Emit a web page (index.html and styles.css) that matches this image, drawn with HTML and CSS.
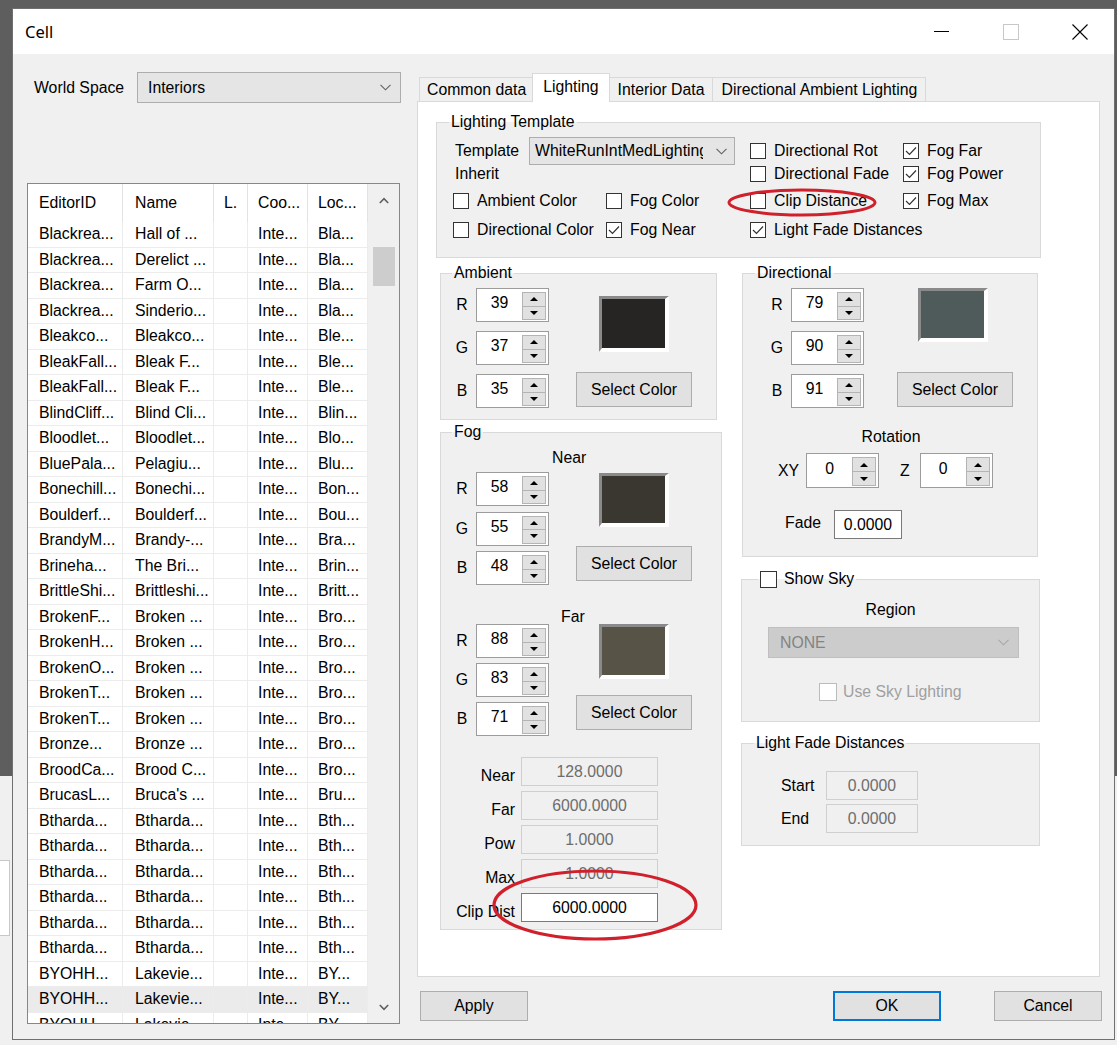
FILE: index.html
```html
<!DOCTYPE html>
<html>
<head>
<meta charset="utf-8">
<title>Cell</title>
<link rel="stylesheet" href="styles.css">
</head>
<body>
<div class="desk-app">
  <div class="da-field"></div>
</div>

<div class="dialog">
  <div class="titlebar">
    <span class="title">Cell</span>
    <div class="wbtns">
      <span class="wb"><svg width="15" height="1" viewBox="0 0 15 1"><rect width="15" height="1" fill="#000"/></svg></span>
      <span class="wb"><svg width="16" height="16" viewBox="0 0 16 16"><rect x=".5" y=".5" width="15" height="15" fill="none" stroke="#c8c8c8"/></svg></span>
      <span class="wb"><svg width="16" height="16" viewBox="0 0 16 16"><path d="M.5 .5L15.5 15.5M15.5 .5L.5 15.5" stroke="#000" stroke-width="1.1" fill="none"/></svg></span>
    </div>
  </div>

  <div class="dbody">
    <div class="leftcol">
      <div class="wsrow">
        <span class="wslabel">World Space</span>
        <div class="combo ws"><span class="ctext">Interiors</span><svg width="11" height="7" viewBox="0 0 11 7"><polyline points="0.5,0.8 5.5,5.8 10.5,0.8" fill="none" stroke="#606060" stroke-width="1.1"/></svg></div>
      </div>
      <div class="list">
        <div class="lmain">
          <div class="lhead"><span>EditorID</span><span>Name</span><span>L.</span><span>Coo...</span><span>Loc...</span></div>
          <div class="lrows">
            <div class="lr"><span>Blackrea...</span><span>Hall of ...</span><span></span><span>Inte...</span><span>Bla...</span></div>
            <div class="lr"><span>Blackrea...</span><span>Derelict ...</span><span></span><span>Inte...</span><span>Bla...</span></div>
            <div class="lr"><span>Blackrea...</span><span>Farm O...</span><span></span><span>Inte...</span><span>Bla...</span></div>
            <div class="lr"><span>Blackrea...</span><span>Sinderio...</span><span></span><span>Inte...</span><span>Bla...</span></div>
            <div class="lr"><span>Bleakco...</span><span>Bleakco...</span><span></span><span>Inte...</span><span>Ble...</span></div>
            <div class="lr"><span>BleakFall...</span><span>Bleak F...</span><span></span><span>Inte...</span><span>Ble...</span></div>
            <div class="lr"><span>BleakFall...</span><span>Bleak F...</span><span></span><span>Inte...</span><span>Ble...</span></div>
            <div class="lr"><span>BlindCliff...</span><span>Blind Cli...</span><span></span><span>Inte...</span><span>Blin...</span></div>
            <div class="lr"><span>Bloodlet...</span><span>Bloodlet...</span><span></span><span>Inte...</span><span>Blo...</span></div>
            <div class="lr"><span>BluePala...</span><span>Pelagiu...</span><span></span><span>Inte...</span><span>Blu...</span></div>
            <div class="lr"><span>Bonechill...</span><span>Bonechi...</span><span></span><span>Inte...</span><span>Bon...</span></div>
            <div class="lr"><span>Boulderf...</span><span>Boulderf...</span><span></span><span>Inte...</span><span>Bou...</span></div>
            <div class="lr"><span>BrandyM...</span><span>Brandy-...</span><span></span><span>Inte...</span><span>Bra...</span></div>
            <div class="lr"><span>Brineha...</span><span>The Bri...</span><span></span><span>Inte...</span><span>Brin...</span></div>
            <div class="lr"><span>BrittleShi...</span><span>Brittleshi...</span><span></span><span>Inte...</span><span>Britt...</span></div>
            <div class="lr"><span>BrokenF...</span><span>Broken ...</span><span></span><span>Inte...</span><span>Bro...</span></div>
            <div class="lr"><span>BrokenH...</span><span>Broken ...</span><span></span><span>Inte...</span><span>Bro...</span></div>
            <div class="lr"><span>BrokenO...</span><span>Broken ...</span><span></span><span>Inte...</span><span>Bro...</span></div>
            <div class="lr"><span>BrokenT...</span><span>Broken ...</span><span></span><span>Inte...</span><span>Bro...</span></div>
            <div class="lr"><span>BrokenT...</span><span>Broken ...</span><span></span><span>Inte...</span><span>Bro...</span></div>
            <div class="lr"><span>Bronze...</span><span>Bronze ...</span><span></span><span>Inte...</span><span>Bro...</span></div>
            <div class="lr"><span>BroodCa...</span><span>Brood C...</span><span></span><span>Inte...</span><span>Bro...</span></div>
            <div class="lr"><span>BrucasL...</span><span>Bruca's ...</span><span></span><span>Inte...</span><span>Bru...</span></div>
            <div class="lr"><span>Btharda...</span><span>Btharda...</span><span></span><span>Inte...</span><span>Bth...</span></div>
            <div class="lr"><span>Btharda...</span><span>Btharda...</span><span></span><span>Inte...</span><span>Bth...</span></div>
            <div class="lr"><span>Btharda...</span><span>Btharda...</span><span></span><span>Inte...</span><span>Bth...</span></div>
            <div class="lr"><span>Btharda...</span><span>Btharda...</span><span></span><span>Inte...</span><span>Bth...</span></div>
            <div class="lr"><span>Btharda...</span><span>Btharda...</span><span></span><span>Inte...</span><span>Bth...</span></div>
            <div class="lr"><span>Btharda...</span><span>Btharda...</span><span></span><span>Inte...</span><span>Bth...</span></div>
            <div class="lr"><span>BYOHH...</span><span>Lakevie...</span><span></span><span>Inte...</span><span>BY...</span></div>
            <div class="lr sel"><span>BYOHH...</span><span>Lakevie...</span><span></span><span>Inte...</span><span>BY...</span></div>
            <div class="lr"><span>BYOHH...</span><span>Lakevie...</span><span></span><span>Inte...</span><span>BY...</span></div>
          </div>
        </div>
        <div class="vscroll">
          <div class="sbtn"><svg width="10" height="7" viewBox="0 0 10 7"><polyline points="0.8,6 5,1.6 9.2,6" fill="none" stroke="#606060" stroke-width="1.6"/></svg></div>
          <div class="strack"><div class="thumb"></div></div>
          <div class="sbtn"><svg width="10" height="7" viewBox="0 0 10 7"><polyline points="0.8,1 5,5.4 9.2,1" fill="none" stroke="#606060" stroke-width="1.6"/></svg></div>
        </div>
      </div>
    </div>

    <div class="rightcol">
      <div class="tabs">
        <span class="tab">Common data</span>
        <span class="tab sel">Lighting</span>
        <span class="tab wide">Interior Data</span>
        <span class="tab wide">Directional Ambient Lighting</span>
      </div>
      <div class="panel">
        <fieldset class="g-tpl">
          <legend>Lighting Template</legend>
          <div class="tgrid">
            <div class="tplrow">
              <span class="tpl-lbl">Template</span>
              <div class="combo tpl"><span class="ctext">WhiteRunIntMedLighting</span><svg width="11" height="7" viewBox="0 0 11 7"><polyline points="0.5,0.8 5.5,5.8 10.5,0.8" fill="none" stroke="#606060" stroke-width="1.1"/></svg></div>
            </div>
            <label class="cb"><span class="box"></span>Directional Rot</label>
            <label class="cb"><span class="box"><svg width="12" height="10" viewBox="0 0 12 10"><polyline points="1,5 4.5,8.5 11,1.5" fill="none" stroke="#333" stroke-width="1.2"/></svg></span>Fog Far</label>

            <span class="inh">Inherit</span>
            <span></span>
            <label class="cb"><span class="box"></span>Directional Fade</label>
            <label class="cb"><span class="box"><svg width="12" height="10" viewBox="0 0 12 10"><polyline points="1,5 4.5,8.5 11,1.5" fill="none" stroke="#333" stroke-width="1.2"/></svg></span>Fog Power</label>

            <label class="cb"><span class="box"></span>Ambient Color</label>
            <label class="cb"><span class="box"></span>Fog Color</label>
            <label class="cb"><span class="box"></span>Clip Distance</label>
            <label class="cb"><span class="box"><svg width="12" height="10" viewBox="0 0 12 10"><polyline points="1,5 4.5,8.5 11,1.5" fill="none" stroke="#333" stroke-width="1.2"/></svg></span>Fog Max</label>

            <label class="cb"><span class="box"></span>Directional Color</label>
            <label class="cb"><span class="box"><svg width="12" height="10" viewBox="0 0 12 10"><polyline points="1,5 4.5,8.5 11,1.5" fill="none" stroke="#333" stroke-width="1.2"/></svg></span>Fog Near</label>
            <label class="cb"><span class="box"><svg width="12" height="10" viewBox="0 0 12 10"><polyline points="1,5 4.5,8.5 11,1.5" fill="none" stroke="#333" stroke-width="1.2"/></svg></span>Light Fade Distances</label>
            <span></span>
          </div>
        </fieldset>

        <div class="cols">
          <div class="lcol">
            <fieldset class="g-amb">
              <legend>Ambient</legend>
              <div class="csec">
                <div class="spins s9">
                  <div class="srow"><span class="slbl">R</span><div class="spin"><span class="val">39</span><span class="arrows"><i class="ab"><b class="up"></b></i><i class="ab"><b class="dn"></b></i></span></div></div>
                  <div class="srow"><span class="slbl">G</span><div class="spin"><span class="val">37</span><span class="arrows"><i class="ab"><b class="up"></b></i><i class="ab"><b class="dn"></b></i></span></div></div>
                  <div class="srow"><span class="slbl">B</span><div class="spin"><span class="val">35</span><span class="arrows"><i class="ab"><b class="up"></b></i><i class="ab"><b class="dn"></b></i></span></div></div>
                </div>
                <div class="colr">
                  <div class="swatch sw-amb"></div>
                  <button class="btn selc selc-amb">Select Color</button>
                </div>
              </div>
            </fieldset>

            <fieldset class="g-fog">
              <legend>Fog</legend>
              <div class="fog-ttl near">Near</div>
              <div class="csec near-sec">
                <div class="spins s55">
                  <div class="srow"><span class="slbl">R</span><div class="spin"><span class="val">58</span><span class="arrows"><i class="ab"><b class="up"></b></i><i class="ab"><b class="dn"></b></i></span></div></div>
                  <div class="srow"><span class="slbl">G</span><div class="spin"><span class="val">55</span><span class="arrows"><i class="ab"><b class="up"></b></i><i class="ab"><b class="dn"></b></i></span></div></div>
                  <div class="srow"><span class="slbl">B</span><div class="spin"><span class="val">48</span><span class="arrows"><i class="ab"><b class="up"></b></i><i class="ab"><b class="dn"></b></i></span></div></div>
                </div>
                <div class="colr">
                  <div class="swatch sw-near"></div>
                  <button class="btn selc selc-near">Select Color</button>
                </div>
              </div>
              <div class="fog-ttl far">Far</div>
              <div class="csec">
                <div class="spins s5">
                  <div class="srow"><span class="slbl">R</span><div class="spin"><span class="val">88</span><span class="arrows"><i class="ab"><b class="up"></b></i><i class="ab"><b class="dn"></b></i></span></div></div>
                  <div class="srow"><span class="slbl">G</span><div class="spin"><span class="val">83</span><span class="arrows"><i class="ab"><b class="up"></b></i><i class="ab"><b class="dn"></b></i></span></div></div>
                  <div class="srow"><span class="slbl">B</span><div class="spin"><span class="val">71</span><span class="arrows"><i class="ab"><b class="up"></b></i><i class="ab"><b class="dn"></b></i></span></div></div>
                </div>
                <div class="colr">
                  <div class="swatch sw-far"></div>
                  <button class="btn selc selc-far">Select Color</button>
                </div>
              </div>
              <div class="drows">
                <span class="dlbl">Near</span><span class="fld dis">128.0000</span>
                <span class="dlbl">Far</span><span class="fld dis">6000.0000</span>
                <span class="dlbl">Pow</span><span class="fld dis">1.0000</span>
                <span class="dlbl">Max</span><span class="fld dis">1.0000</span>
                <span class="dlbl">Clip Dist</span><span class="fld">6000.0000</span>
              </div>
            </fieldset>
          </div>

          <div class="rcol">
            <fieldset class="g-dir">
              <legend>Directional</legend>
              <div class="csec">
                <div class="spins s9">
                  <div class="srow"><span class="slbl">R</span><div class="spin"><span class="val">79</span><span class="arrows"><i class="ab"><b class="up"></b></i><i class="ab"><b class="dn"></b></i></span></div></div>
                  <div class="srow"><span class="slbl">G</span><div class="spin"><span class="val">90</span><span class="arrows"><i class="ab"><b class="up"></b></i><i class="ab"><b class="dn"></b></i></span></div></div>
                  <div class="srow"><span class="slbl">B</span><div class="spin"><span class="val">91</span><span class="arrows"><i class="ab"><b class="up"></b></i><i class="ab"><b class="dn"></b></i></span></div></div>
                </div>
                <div class="colr dircolr">
                  <div class="swatch sw-dir"></div>
                  <button class="btn selc selc-dir">Select Color</button>
                </div>
              </div>
              <div class="rot-ttl">Rotation</div>
              <div class="rotrow">
                <span class="xy">XY</span>
                <div class="spin tall"><span class="val">0</span><span class="arrows"><i class="ab"><b class="up"></b></i><i class="ab"><b class="dn"></b></i></span></div>
                <span class="zl">Z</span>
                <div class="spin tall"><span class="val">0</span><span class="arrows"><i class="ab"><b class="up"></b></i><i class="ab"><b class="dn"></b></i></span></div>
              </div>
              <div class="faderow">
                <span class="fade-lbl">Fade</span>
                <span class="fld fade">0.0000</span>
              </div>
            </fieldset>

            <fieldset class="g-sky">
              <legend><span class="box sky-box"></span>Show Sky</legend>
              <div class="region">Region</div>
              <div class="combo dis-combo"><span class="ctext">NONE</span><svg width="11" height="7" viewBox="0 0 11 7"><polyline points="0.5,0.8 5.5,5.8 10.5,0.8" fill="none" stroke="#a8a8a8" stroke-width="1.1"/></svg></div>
              <label class="cb usesky"><span class="box dis-box"></span>Use Sky Lighting</label>
            </fieldset>

            <fieldset class="g-lfd">
              <legend>Light Fade Distances</legend>
              <div class="lfrow"><span class="lf-lbl">Start</span><span class="fld dis lf">0.0000</span></div>
              <div class="lfrow"><span class="lf-lbl">End</span><span class="fld dis lf">0.0000</span></div>
            </fieldset>
          </div>
        </div>
      </div>
      <div class="btnrow">
        <button class="btn dbtn">Apply</button>
        <button class="btn dbtn ok">OK</button>
        <button class="btn dbtn cancel">Cancel</button>
      </div>
    </div>
  </div>
</div>

<svg class="annot" width="1117" height="1045" viewBox="0 0 1117 1045">
  <ellipse cx="802" cy="202.5" rx="73" ry="12.5" fill="none" stroke="#d0202c" stroke-width="3"/>
  <ellipse cx="595" cy="905" rx="101" ry="34" fill="none" stroke="#d0202c" stroke-width="3.2"/>
</svg>
</body>
</html>
```

FILE: styles.css
```css
* { box-sizing: border-box; }
html, body { margin: 0; padding: 0; }
body {
  width: 1117px;
  height: 1045px;
  overflow: hidden;
  position: relative;
  background: #5e5e5e;
  font-family: "Liberation Sans", Arial, sans-serif;
  font-size: 15.8px;
  color: #000;
}

/* background application window (under the dialog) */
.desk-app {
  position: absolute;
  left: 0;
  top: 776px;
  width: 1117px;
  height: 269px;
  background: #f0f0f0;
}
.da-field {
  position: absolute;
  left: -20px;
  top: 84px;
  width: 30px;
  height: 76px;
  background: #fff;
  border: 1px solid #c8c8c8;
}

/* dialog */
.dialog {
  position: relative;
  z-index: 1;
  margin: 8px 0 0 12px;
  width: 1103px;
  height: 1032px;
  border: 1px solid #6f6f6f;
  background: #f0f0f0;
  display: flex;
  flex-direction: column;
}
.titlebar {
  flex: none;
  height: 45px;
  background: #fff;
  display: flex;
  align-items: center;
}
.title {
  flex: 1;
  margin-left: 12px;
  font-family: "Noto Sans", "Open Sans", sans-serif;
  font-size: 16.5px;
}
.wbtns { display: flex; height: 45px; }
.wb { width: 69px; display: flex; align-items: center; justify-content: center; }
.wb svg { display: block; }

.dbody {
  flex: 1;
  display: grid;
  grid-template-columns: 373px 683px;
  column-gap: 17px;
  padding: 18px 0 0 14px;
}

/* left column */
.wsrow { display: flex; align-items: center; height: 31px; }
.wslabel { flex: 1; margin-left: 7px; }
.combo {
  display: flex;
  align-items: center;
  background: #e5e5e5;
  border: 1px solid #adadad;
  white-space: nowrap;
}
.combo .ctext { flex: 1; overflow: hidden; }
.combo svg { flex: none; display: block; }
.combo.ws { width: 264px; height: 31px; margin-right: -1px; padding-left: 10px; }
.combo.ws svg { margin: 0 9px 0 4px; }

.list {
  margin-top: 80px;
  height: 841px;
  border: 1px solid #828790;
  background: #fff;
  display: flex;
}
.lmain { width: 340px; flex: none; overflow: hidden; }
.lhead, .lr { display: grid; grid-template-columns: 95px 91px 34px 60px 60px; }
.lhead { height: 38px; }
.lhead span {
  display: flex;
  align-items: center;
  padding-left: 10px;
  border-right: 1px solid #e3e3e3;
  padding-bottom: 1px;
}
.lhead span:nth-child(1) { padding-left: 11px; }
.lhead span:nth-child(2) { padding-left: 12px; }
.lrows { height: 801px; overflow: hidden; }
.lr { height: 25.5px; }
.lr span {
  padding-left: 10px;
  border-right: 1px solid #ececec;
  border-bottom: 1px solid #ececec;
  white-space: nowrap;
  overflow: hidden;
  line-height: 24.5px;
}
.lr span:nth-child(1) { padding-left: 11px; }
.lr span:nth-child(2) { padding-left: 12px; }
.lr.sel { background: #ebebeb; }

.vscroll { flex: 1; background: #f0f0f0; display: flex; flex-direction: column; }
.sbtn { height: 32px; display: flex; align-items: center; justify-content: center; flex: none; }
.sbtn svg { display: block; }
.strack { flex: 1; }
.thumb { margin: 31px 0 0 5px; width: 22px; height: 39px; background: #cdcdcd; }

/* right column */
.rightcol { display: flex; flex-direction: column; }
.tabs {
  position: relative;
  z-index: 1;
  display: flex;
  align-items: flex-end;
  height: 28px;
  margin: 1px 0 0 2px;
}
.tab {
  height: 24px;
  padding: 0 7px;
  border: 1px solid #d9d9d9;
  border-bottom: none;
  background: #f0f0f0;
  display: flex;
  align-items: center;
  white-space: nowrap;
}
.tab.wide { padding: 0 8px; }
.tab + .tab { margin-left: -1px; }
.tab.sel {
  position: relative;
  z-index: 1;
  height: 29px;
  margin: 0 0 -1px -2px;
  padding: 0 10px 2px;
  background: #fff;
}
.panel {
  height: 876px;
  background: #fff;
  border: 1px solid #d9d9d9;
}

/* group boxes */
fieldset {
  margin: 0;
  padding: 0;
  min-width: 0;
  border: 1px solid #d9d9d9;
  background: #f0f0f0;
}
legend {
  padding: 0 2px;
  line-height: 18px;
  white-space: nowrap;
}

.g-tpl { margin: 11px 0 0 18px; width: 605px; padding: 6px 0 16px 16px; }
.g-tpl legend { margin-left: -4px; }
.tgrid {
  display: grid;
  grid-template-columns: 153px 144px 153px 1fr;
  grid-template-rows: 28px 18px 36px 22px;
  align-items: center;
}
.tplrow { grid-column: 1 / 3; display: flex; align-items: center; }
.tpl-lbl { margin-left: 2px; }
.combo.tpl { margin-left: 10px; width: 206px; height: 28px; padding-left: 5px; }
.combo.tpl .ctext { max-width: 168px; }
.combo.tpl svg { margin: 0 7px 0 auto; }
.inh { margin-left: 2px; }

.cb { display: flex; align-items: center; white-space: nowrap; }
.box {
  width: 16px;
  height: 16px;
  flex: none;
  margin-right: 8px;
  border: 1px solid #333;
  background: #fff;
  display: flex;
  align-items: center;
  justify-content: center;
}
.box svg { display: block; }

.cols { display: flex; gap: 19px; margin: 6px 0 0 22px; }
.lcol { width: 282px; }
.rcol { width: 299px; }

.csec { display: flex; }
.spins { display: flex; flex-direction: column; }
.s9 { gap: 9px; }
.s55 { gap: 5.5px; }
.s5 { gap: 5px; }
.srow { display: flex; align-items: center; }
.slbl { width: 20px; margin-right: 4px; text-align: center; }

.spin {
  width: 73px;
  height: 34px;
  border: 1px solid #9c9c9c;
  background: #fff;
  display: flex;
}
.spin.tall { height: 35px; }
.spin .val {
  flex: 1;
  display: flex;
  align-items: center;
  justify-content: center;
  padding-bottom: 4px;
}
.arrows {
  width: 26px;
  display: flex;
  flex-direction: column;
  padding: 3px 2px 1px 0;
}
.ab {
  flex: 1;
  background: #e1e1e1;
  border: 1px solid #b4b4b4;
  display: flex;
  align-items: center;
  justify-content: center;
}
.ab + .ab { margin-top: -1px; }
.up, .dn { width: 0; height: 0; border-left: 4px solid transparent; border-right: 4px solid transparent; }
.up { border-bottom: 4px solid #000; }
.dn { border-top: 4px solid #000; }

.colr { width: 116px; margin-left: 27px; display: flex; flex-direction: column; align-items: center; }
.swatch {
  width: 70px;
  border-style: solid;
  border-width: 3px 4px 4px 3px;
  border-color: #8a8a8a #ffffff #ffffff #8a8a8a;
}
.btn {
  font-family: inherit;
  font-size: 15.8px;
  color: #000;
  background: #e1e1e1;
  border: 1px solid #adadad;
  padding: 0;
  margin: 0;
}
.selc { width: 116px; height: 35px; }

.g-amb { width: 277px; padding: 6px 0 11px 11px; }
.g-amb legend { margin-left: 0; }
.sw-amb { margin-top: 8px; height: 56px; background: #272523; }
.selc-amb { margin-top: 20px; }

.g-fog { width: 282px; margin-top: 3px; padding: 8px 0 7px 11px; }
.g-fog legend { margin-left: 0; }
.fog-ttl { line-height: 18px; }
.fog-ttl.near { margin-left: 100px; }
.near-sec { margin-top: 5px; }
.sw-near { margin-top: 1px; height: 54px; background: #3a3730; }
.selc-near { margin-top: 19px; }
.fog-ttl.far { margin: 25px 0 0 109px; line-height: 14px; }
.sw-far { height: 55px; background: #585347; }
.selc-far { margin-top: 16px; }

.drows {
  margin-top: 21px;
  display: grid;
  grid-template-columns: 63px 137px;
  grid-auto-rows: 29px;
  column-gap: 6px;
  row-gap: 5px;
}
.dlbl { text-align: right; align-self: end; line-height: 18px; margin-bottom: 1px; white-space: nowrap; }
.fld {
  display: flex;
  align-items: center;
  justify-content: center;
  height: 29px;
  background: #fff;
  border: 1px solid #7a7a7a;
  white-space: nowrap;
}
.fld.dis { background: #f0f0f0; border-color: #cfcfcf; color: #6d6d6d; }

.g-dir { margin-left: 1px; width: 296px; padding: 6px 0 17px 24px; }
.g-dir legend { margin-left: -12px; }
.dircolr { margin-left: 33px; align-items: flex-start; }
.sw-dir { margin-left: 21px; height: 54px; background: #4f5a5b; }
.selc-dir { margin-top: 30px; }
.rot-ttl { margin: 20px 0 0 -22px; line-height: 18px; text-align: center; }
.rotrow { display: flex; align-items: center; margin-top: 7px; }
.xy { margin: 0 7px 0 11px; }
.zl { margin: 0 10px 0 21px; }
.faderow { display: flex; align-items: center; margin-top: 22px; }
.fade-lbl { margin: 0 13px 0 18px; padding-bottom: 4px; }
.fld.fade { width: 68px; }

.g-sky { margin-top: 13px; width: 299px; padding: 13px 0 20px 0; }
.g-sky legend { margin-left: 16px; display: flex; align-items: center; }
.sky-box { width: 17px; height: 17px; margin-right: 7px; }
.region { line-height: 18px; text-align: center; }
.combo.dis-combo {
  margin: 8px 0 0 26px;
  width: 251px;
  height: 31px;
  background: #cccccc;
  border-color: #bfbfbf;
  color: #838383;
  padding-left: 11px;
}
.combo.dis-combo svg { margin-right: 9px; }
.usesky { margin: 25px 0 0 77px; height: 18px; color: #a0a0a0; }
.dis-box { width: 18px; height: 18px; margin-right: 6px; border-color: #bcbcbc; }

.g-lfd { margin-top: 12px; width: 299px; padding: 19px 0 12px 39px; }
.g-lfd legend { margin-left: -27px; }
.lfrow { display: flex; align-items: center; height: 29px; }
.lfrow + .lfrow { margin-top: 4px; }
.lf-lbl { width: 45px; }
.fld.lf { width: 92px; }

.btnrow { display: flex; margin: 14px -2px 0 3px; }
.dbtn { width: 108px; height: 30px; }
.dbtn.ok { margin-left: auto; border: 2px solid #0078d7; }
.dbtn.cancel { margin-left: 53px; }

/* annotation overlay */
.annot { position: absolute; left: 0; top: 0; z-index: 5; pointer-events: none; }
```
